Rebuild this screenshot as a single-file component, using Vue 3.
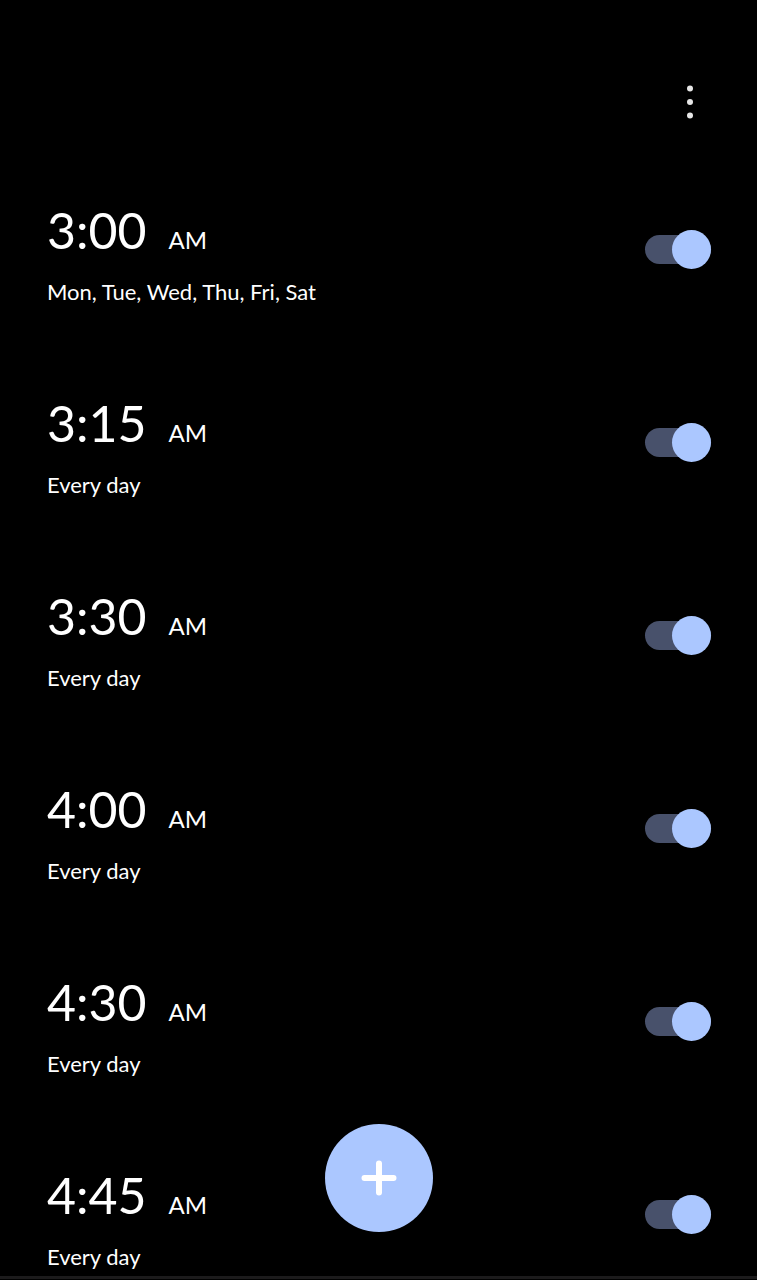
<script setup>
import { ref } from 'vue'

const alarms = ref([
  { id: 1, time: '3:00', period: 'AM', days: 'Mon, Tue, Wed, Thu, Fri, Sat', on: true },
  { id: 2, time: '3:15', period: 'AM', days: 'Every day', on: true },
  { id: 3, time: '3:30', period: 'AM', days: 'Every day', on: true },
  { id: 4, time: '4:00', period: 'AM', days: 'Every day', on: true },
  { id: 5, time: '4:30', period: 'AM', days: 'Every day', on: true },
  { id: 6, time: '4:45', period: 'AM', days: 'Every day', on: true }
])
</script>

<template>
  <div class="screen">
    <header class="toolbar">
      <button class="more" type="button" aria-label="More options">
        <svg width="8" height="36" viewBox="0 0 8 36" aria-hidden="true">
          <circle cx="4" cy="4.5" r="3" />
          <circle cx="4" cy="18" r="3" />
          <circle cx="4" cy="31.5" r="3" />
        </svg>
      </button>
    </header>

    <ul class="alarms">
      <li v-for="alarm in alarms" :key="alarm.id" class="alarm">
        <label class="details" :for="'alarm-' + alarm.id">
          <span class="clock">
            <span class="time">{{ alarm.time }}</span>
            <span class="period">{{ alarm.period }}</span>
          </span>
          <span class="days">{{ alarm.days }}</span>
        </label>
        <input :id="'alarm-' + alarm.id" v-model="alarm.on" class="switch" type="checkbox" role="switch" />
      </li>
    </ul>

    <button class="add" type="button" aria-label="Add alarm">
      <svg width="36" height="36" viewBox="0 0 36 36" aria-hidden="true">
        <path d="M18 3.5V32.5M3.5 18H32.5" />
      </svg>
    </button>
  </div>
</template>

<style>
body {
  margin: 0;
  background: #000;
}
</style>

<style scoped>
.screen {
  display: flex;
  flex-direction: column;
  box-sizing: border-box;
  height: 100vh;
  padding-bottom: 1px;
  background: #000;
  color: #fff;
  font-family: Lato, sans-serif;
}

.toolbar {
  display: flex;
  flex: none;
  justify-content: flex-end;
  padding: 76px 41px 25px;
}

.more {
  display: flex;
  align-items: center;
  justify-content: center;
  width: 52px;
  height: 52px;
  padding: 0;
  border: 0;
  background: none;
}

.more svg {
  fill: #e6e6e6;
}

.alarms {
  flex: 1;
  min-height: 0;
  margin: 0;
  padding: 0;
  overflow-y: auto;
  border-bottom: 3px solid #1c1b1c;
  list-style: none;
  scrollbar-width: none;
}

.alarm {
  display: flex;
  align-items: center;
  justify-content: space-between;
  box-sizing: border-box;
  min-height: 193px;
  padding: 0 46px 0 47px;
}

.details {
  display: flex;
  flex-direction: column;
  gap: 4px;
}

.clock {
  display: flex;
  align-items: baseline;
  gap: 22px;
  line-height: 70px;
}

.time {
  font-size: 50px;
}

.period {
  font-size: 24px;
}

.days {
  font-size: 22px;
  line-height: 26px;
}

.switch {
  display: flex;
  flex: none;
  align-items: center;
  justify-content: flex-start;
  width: 66px;
  height: 29px;
  margin: 0;
  appearance: none;
  background: #48516b;
  border-radius: 15px;
}

.switch::before {
  flex: none;
  width: 39px;
  height: 39px;
  border-radius: 50%;
  background: #8b8f99;
  content: "";
}

.switch:checked {
  justify-content: flex-end;
}

.switch:checked::before {
  background: #abc7ff;
}

.add {
  position: fixed;
  bottom: 48px;
  left: 50%;
  display: flex;
  align-items: center;
  justify-content: center;
  width: 108px;
  height: 108px;
  padding: 0;
  border: 0;
  border-radius: 50%;
  background: #abc7ff;
  transform: translateX(-50%);
}

.add svg {
  fill: none;
  stroke: #fff;
  stroke-width: 6;
  stroke-linecap: round;
}
</style>
